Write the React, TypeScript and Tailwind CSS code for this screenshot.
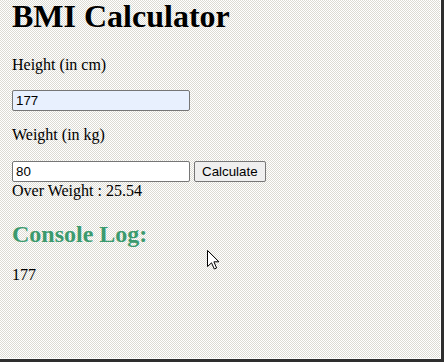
import React from 'react';

export default function App() {
  return (
    <div className="relative w-[444px] h-[362px] overflow-hidden bg-[#2e2e2e]">
      <div className="w-[441px] h-[359px] bg-[#fbfbfa] pr-px pb-px">
        <div className="w-full h-full bg-[#ecebe7] bg-[repeating-conic-gradient(#ffffff_0_25%,#dcdbd3_0_50%)] bg-[length:2px_2px] pl-[12px] font-['Liberation_Serif',serif] text-black">
          <h1 className="text-[32px] leading-[32px] font-bold">BMI Calculator</h1>

          <p className="mt-[24px] text-[16px] leading-[18px]">Height (in cm)</p>
          <input
            type="text"
            defaultValue="177"
            className="mt-[16px] block w-[178px] h-[21px] px-[3px] border border-[#767676] rounded-[2px] bg-[#e8f0fe] font-['Liberation_Sans',sans-serif] text-[13.33px] outline-none"
          />

          <p className="mt-[15px] text-[16px] leading-[18px]">Weight (in kg)</p>
          <div className="mt-[17px] flex items-center gap-[4px] h-[21px]">
            <input
              type="text"
              defaultValue="80"
              className="block w-[178px] h-[21px] px-[3px] border border-[#767676] rounded-[2px] bg-white font-['Liberation_Sans',sans-serif] text-[13.33px] outline-none"
            />
            <button className="h-[21px] px-[7px] border border-[#767676] rounded-[2px] bg-[#efefef] font-['Liberation_Sans',sans-serif] text-[13.33px] leading-none">
              Calculate
            </button>
          </div>
          <div className="text-[16px] leading-[18px]">Over Weight : 25.54</div>

          <h2 className="mt-[22px] text-[24px] leading-[24px] font-bold text-[#3b9a6e]">Console Log:</h2>
          <div className="mt-[20px] text-[16px] leading-[18px]">177</div>
        </div>
      </div>

      {/* mouse pointer */}
      <svg className="absolute left-[207px] top-[250px]" width="13" height="20" viewBox="0 0 13 20">
        <polygon
          points="0.5,0.5 0.5,16.5 4.5,12.8 7.3,19 9.6,18 6.9,11.8 11.9,11.8"
          fill="#fff"
          stroke="#000"
          strokeWidth="1"
          strokeLinejoin="miter"
        />
      </svg>
    </div>
  );
}
